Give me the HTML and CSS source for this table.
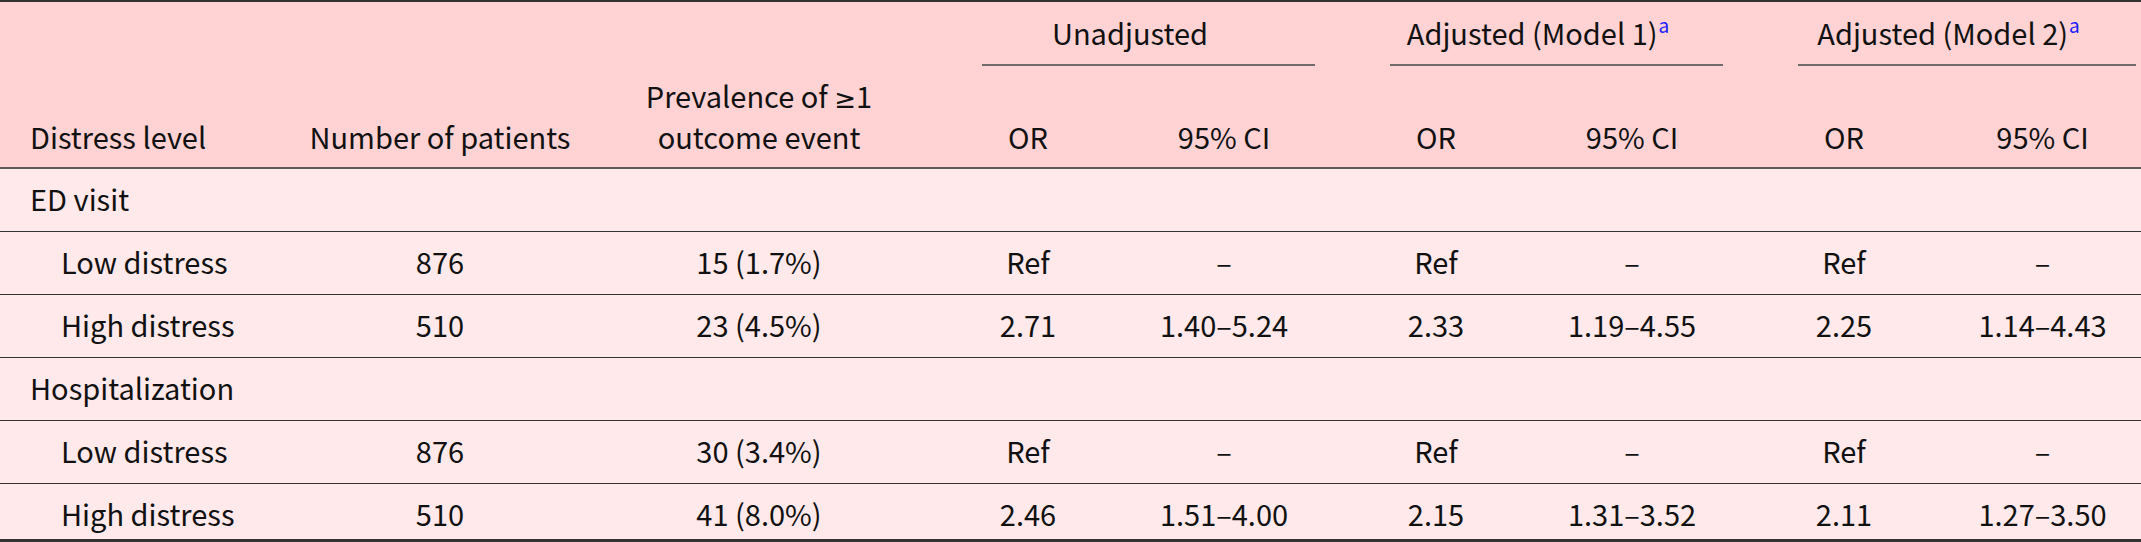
FILE: index.html
```html
<!DOCTYPE html>
<html lang="en">
<head>
    <meta charset="UTF-8">
    <meta name="viewport" content="width=device-width, initial-scale=1.0">
    <title>Distress level and outcome events</title>
    <link rel="stylesheet" href="styles.css">
</head>
<body>
    <table class="odds-table">
        <colgroup>
            <col class="col-level">
            <col class="col-patients">
            <col class="col-prev">
            <col class="col-or">
            <col class="col-ci">
            <col class="col-or">
            <col class="col-ci">
            <col class="col-or">
            <col class="col-ci last">
        </colgroup>
        <thead>
            <tr class="group-row">
                <th rowspan="2" class="level">Distress level</th>
                <th rowspan="2">Number of patients</th>
                <th rowspan="2">Prevalence of <span class="geq">&ge;</span>1<br>outcome event</th>
                <th colspan="2" class="group"><div class="group-label">Unadjusted</div></th>
                <th colspan="2" class="group"><div class="group-label">Adjusted (Model 1)<sup class="fn">a</sup></div></th>
                <th colspan="2" class="group"><div class="group-label">Adjusted (Model 2)<sup class="fn">a</sup></div></th>
            </tr>
            <tr class="sub-row">
                <th class="or">OR</th>
                <th>95% CI</th>
                <th class="or">OR</th>
                <th>95% CI</th>
                <th class="or">OR</th>
                <th>95% CI</th>
            </tr>
        </thead>
        <tbody>
            <tr class="section">
                <td class="level" colspan="9">ED visit</td>
            </tr>
            <tr>
                <td class="level sub">Low distress</td>
                <td>876</td>
                <td>15 (1.7%)</td>
                <td class="or">Ref</td>
                <td>&ndash;</td>
                <td class="or">Ref</td>
                <td>&ndash;</td>
                <td class="or">Ref</td>
                <td>&ndash;</td>
            </tr>
            <tr>
                <td class="level sub">High distress</td>
                <td>510</td>
                <td>23 (4.5%)</td>
                <td class="or">2.71</td>
                <td>1.40&ndash;5.24</td>
                <td class="or">2.33</td>
                <td>1.19&ndash;4.55</td>
                <td class="or">2.25</td>
                <td>1.14&ndash;4.43</td>
            </tr>
            <tr class="section">
                <td class="level" colspan="9">Hospitalization</td>
            </tr>
            <tr>
                <td class="level sub">Low distress</td>
                <td>876</td>
                <td>30 (3.4%)</td>
                <td class="or">Ref</td>
                <td>&ndash;</td>
                <td class="or">Ref</td>
                <td>&ndash;</td>
                <td class="or">Ref</td>
                <td>&ndash;</td>
            </tr>
            <tr class="last-row">
                <td class="level sub">High distress</td>
                <td>510</td>
                <td>41 (8.0%)</td>
                <td class="or">2.46</td>
                <td>1.51&ndash;4.00</td>
                <td class="or">2.15</td>
                <td>1.31&ndash;3.52</td>
                <td class="or">2.11</td>
                <td>1.27&ndash;3.50</td>
            </tr>
        </tbody>
    </table>
</body>
</html>
```

FILE: styles.css
```css
body {
    margin: 0;
    background-color: #ffe9ea;
    font-family: "Noto Sans CJK SC", "Source Sans Pro", sans-serif;
    color: #111;
}
.odds-table {
    width: 2141px;
    table-layout: fixed;
    border-collapse: collapse;
    font-size: 29px;
    line-height: 37px;
    border-top: 2px solid #333;
    border-bottom: 3px solid #333;
}
.col-level { width: 274px; }
.col-patients { width: 332px; }
.col-prev { width: 306px; }
.col-or { width: 216px; }
.col-ci { width: 192px; }
.col-ci.last { width: 197px; }

.odds-table th,
.odds-table td {
    padding: 0;
    text-align: center;
    font-weight: normal;
}
.odds-table thead {
    background-color: #ffd3d4;
    border-bottom: 2px solid #5e5a5a;
}
.odds-table .level {
    text-align: left;
    padding-left: 30px;
}
.odds-table .level.sub {
    padding-left: 61px;
}
.odds-table .or {
    padding-left: 16px;
}
.geq {
    font-family: "DejaVu Sans", sans-serif;
    font-size: 26px;
}

/* header rows */
.group-row th {
    vertical-align: bottom;
    padding-bottom: 12px;
}
.group-row th.group {
    vertical-align: top;
    padding: 0;
}
.group-label {
    margin: 0 5px 0 70px;
    padding: 12px 37px 13px 0;
    border-bottom: 2px solid #706a6a;
}
.sub-row th {
    height: 89px;
    vertical-align: bottom;
    padding-bottom: 12px;
}
.fn {
    color: #1a1aff;
    font-size: 19px;
    line-height: 0;
    vertical-align: 12px;
    margin-left: 1px;
}

/* body rows */
.odds-table tbody tr {
    border-bottom: 1px solid #333;
}
.odds-table tbody td {
    height: 37px;
    padding-top: 11px;
    padding-bottom: 14px;
    vertical-align: top;
}
.odds-table tbody .last-row {
    border-bottom: none;
}
.odds-table tbody .last-row td {
    padding-bottom: 7px;
}
```
